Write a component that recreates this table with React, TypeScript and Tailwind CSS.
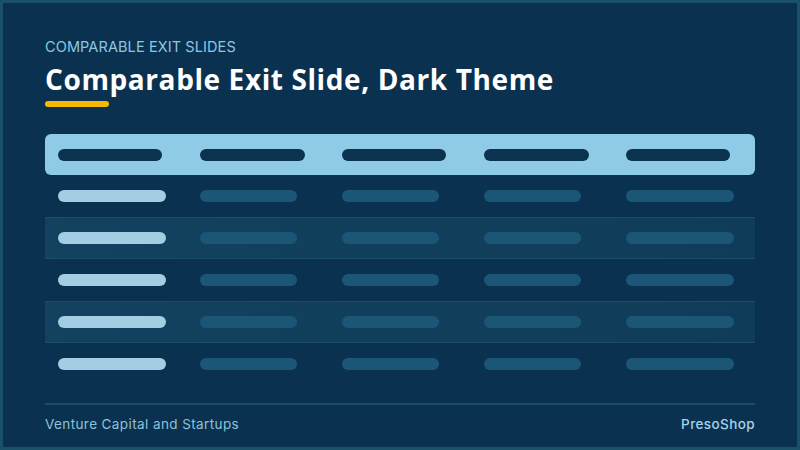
const columns = 5;

const rows = [0, 1, 2, 3, 4];

// body pill widths per column (first column is the highlighted label column)
const bodyWidths = ["w-[108px]", "w-[97px]", "w-[97px]", "w-[97px]", "w-[108px]"];
const headWidths = ["w-[104px]", "w-[105px]", "w-[104px]", "w-[105px]", "w-[104px]"];

function HeaderRow() {
  return (
    <div className="grid h-[41px] grid-cols-5 items-center rounded-[6px] bg-[#8fcbe7]">
      {headWidths.map((w, i) => (
        <div key={i} className="pl-[13px]">
          <div className={`h-[12px] ${w} rounded-full bg-[#0b3350]`} />
        </div>
      ))}
    </div>
  );
}

function BodyRow({ alt }: { alt: boolean }) {
  return (
    <div
      className={
        alt
          ? "grid h-[42px] grid-cols-5 items-center border-y border-[#1a4d69] bg-gradient-to-r from-[#12425f] to-[#0f3c59]"
          : "grid h-[42px] grid-cols-5 items-center"
      }
    >
      {Array.from({ length: columns }).map((_, i) => (
        <div key={i} className="pl-[13px]">
          <div
            className={`h-[12px] ${bodyWidths[i]} rounded-full ${
              i === 0 ? "bg-[#a2cde3]" : "bg-[#1c5676]"
            }`}
          />
        </div>
      ))}
    </div>
  );
}

export default function App() {
  return (
    <div
      className="flex h-[450px] w-[800px] flex-col border-[3px] border-[#1a5068] bg-[#0a3250] px-[42px]"
      style={{ fontFamily: "Inter, 'Open Sans', sans-serif" }}
    >
      <div className="mt-[34px] text-[14.5px] leading-[20px] tracking-[0.1px] text-[#8ec7e2]">
        COMPARABLE EXIT SLIDES
      </div>
      <h1
        className="mt-[7px] text-[28px] font-bold leading-[30px] tracking-[0.6px] text-white"
        style={{ fontFamily: "'Open Sans', Inter, sans-serif" }}
      >
        Comparable Exit Slide, Dark Theme
      </h1>
      <div className="mt-[7px] h-[6px] w-[64px] rounded-full bg-[#f6b800]" />

      <div className="mt-[27px] flex flex-col">
        <HeaderRow />
        {rows.map((r) => (
          <BodyRow key={r} alt={r % 2 === 1} />
        ))}
      </div>

      <div className="mt-[18px] h-[2px] bg-[#1a4d69]" />
      <div className="flex flex-1 items-center justify-between pb-[3px] text-[13.5px] tracking-[0.4px] text-[#8fc0da]">
        <span>Venture Capital and Startups</span>
        <span className="font-medium text-[#a6d3ea]">PresoShop</span>
      </div>
    </div>
  );
}
